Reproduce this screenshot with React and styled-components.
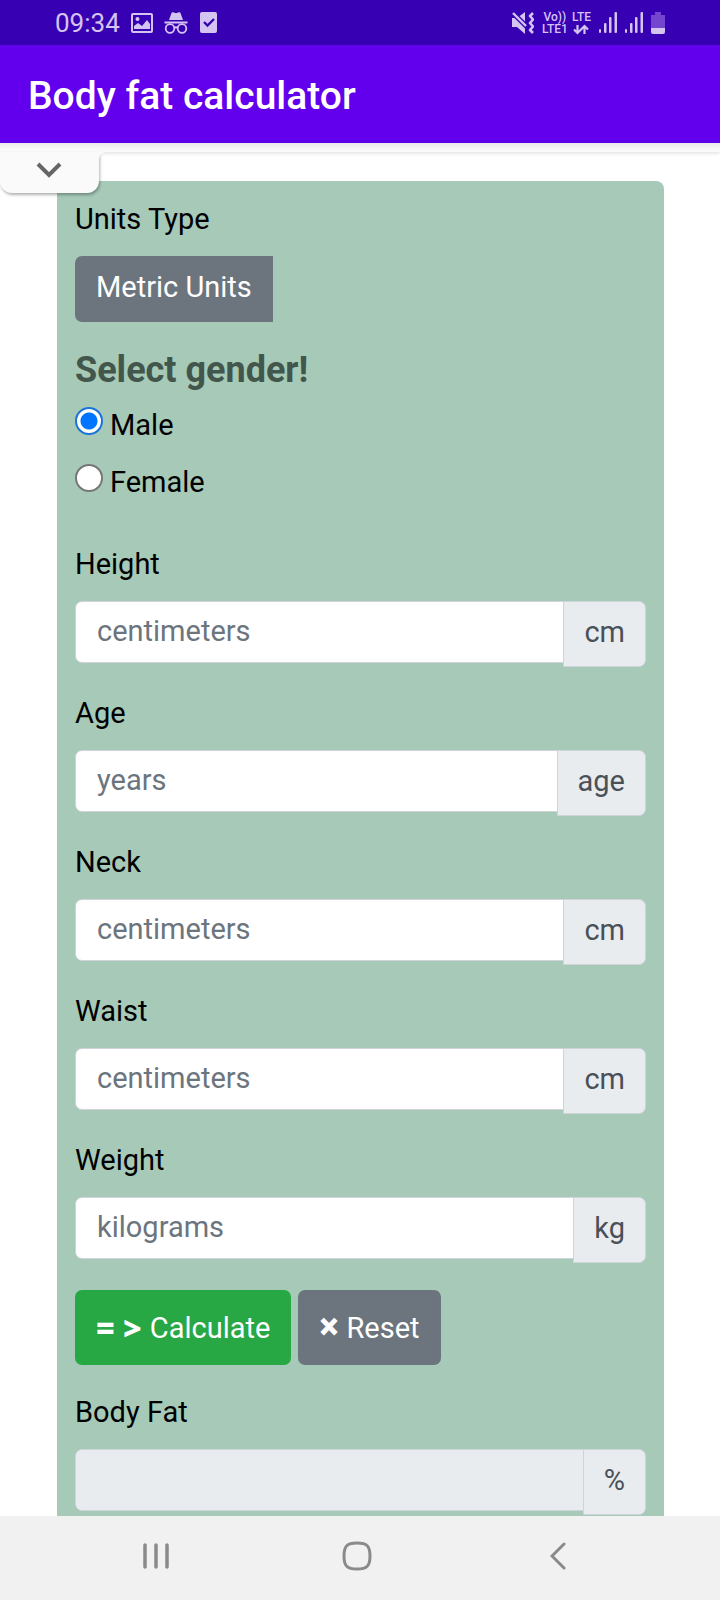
import React, { useState } from 'react';
import styled, { createGlobalStyle } from 'styled-components';

const measures = [
  { id: 'height', label: 'Height', placeholder: 'centimeters', unit: 'cm' },
  { id: 'age', label: 'Age', placeholder: 'years', unit: 'age' },
  { id: 'neck', label: 'Neck', placeholder: 'centimeters', unit: 'cm' },
  { id: 'waist', label: 'Waist', placeholder: 'centimeters', unit: 'cm' },
  { id: 'weight', label: 'Weight', placeholder: 'kilograms', unit: 'kg' },
];

const SignalIcon = () => (
  <svg width="18" height="21" viewBox="0 0 18 21" fill="currentColor">
    <rect x="0" y="17" width="2" height="4" rx="1" />
    <rect x="5" y="11" width="2.5" height="10" rx="1" />
    <rect x="10" y="5" width="2.5" height="16" rx="1" />
    <rect x="15.500" y="0" width="2.5" height="21" rx="1" />
  </svg>
);

const StatusBar = () => (
  <Status>
    <StatusGroup $gap={11}>
      <Clock>09:34</Clock>
      <svg width="22" height="20" viewBox="0 0 22 20">
        <rect x="1" y="1" width="20" height="18" rx="1" fill="none" stroke="currentColor" strokeWidth="2" />
        <circle cx="6.5" cy="6" r="2" fill="currentColor" />
        <path d="M3 16v-3l4-3 4 3 5-6 3 4v5z" fill="currentColor" />
      </svg>
      <svg width="24" height="22" viewBox="0 0 24 22">
        <path d="M5 8 7.5 1q.5-1 1.5-.7l3 1 3-1q1-.3 1.5.7L19 8zM.5 9.5h23v2H.5z" fill="currentColor" />
        <g fill="none" stroke="currentColor" strokeWidth="1.8">
          <circle cx="6" cy="16.5" r="4.300" />
          <circle cx="18" cy="16.5" r="4.300" />
          <path d="M10 16q2-1.500 4 0" />
        </g>
      </svg>
      <svg width="18" height="21" viewBox="0 0 18 21">
        <rect x="1" width="17" height="21" rx="2" fill="currentColor" />
        <path d="M5 10l3.500 3.500L15 7" fill="none" stroke="#3700b3" strokeWidth="2.400" />
      </svg>
    </StatusGroup>
    <StatusGroup $gap={8}>
      <svg width="22" height="22" viewBox="0 0 22 22">
        <path d="M0 6h5l8-6v22l-8-7H0z" fill="currentColor" />
        <path d="M0 0 15 15" stroke="#3700b3" strokeWidth="5" />
        <path d="M1 1l13 13" stroke="currentColor" strokeWidth="2.400" />
        <path d="M21 1l-3 3 3 3.500-3 3.500 3 3.500-3 3.500 3 3" fill="none" stroke="currentColor" strokeWidth="2.600" strokeLinejoin="round" />
      </svg>
      <StatusGroup $gap={4}>
        <NetLabel>
          <span>Vo))</span>
          <span>LTE1</span>
        </NetLabel>
        <NetLabel>
          <span>LTE</span>
          <svg width="16" height="12" viewBox="0 0 16 12" fill="none" stroke="currentColor" strokeWidth="2.200">
            <path d="M4.500 2v8M1 6.500l3.500 3.500L8 6.500M11.500 11V3M8 6.500L11.500 3 15 6.500" />
          </svg>
        </NetLabel>
      </StatusGroup>
      <SignalIcon />
      <SignalIcon />
      <svg width="14" height="22" viewBox="0 0 14 22">
        <path d="M4 0h6v3h4v13H0V3h4z" fill="#7446cf" />
        <path d="M0 16h14v4q0 2-2 2H2q-2 0-2-2z" fill="currentColor" />
      </svg>
    </StatusGroup>
  </Status>
);

const UnitField = ({ id, label, placeholder, unit, value, onChange, readOnly }) => (
  <Field>
    <Label htmlFor={id}>{label}</Label>
    <InputGroup>
      <Input id={id} type="text" placeholder={placeholder} value={value} onChange={onChange} readOnly={readOnly} />
      <Unit>{unit}</Unit>
    </InputGroup>
  </Field>
);

const App = () => {
  const [gender, setGender] = useState('male');
  const [values, setValues] = useState({});
  const [result, setResult] = useState('');

  const valueHandler = id => event => {
    setValues({ ...values, [id]: event.target.value });
  };

  const calculate = event => {
    event.preventDefault();
    const height = Number(values.height);
    const neck = Number(values.neck);
    const waist = Number(values.waist);
    if (!height || waist <= neck) return;
    const base = gender === 'male'
      ? 1.0324 - 0.19077 * Math.log10(waist - neck) + 0.15456 * Math.log10(height)
      : 1.29579 - 0.35004 * Math.log10(waist - neck) + 0.221 * Math.log10(height);
    setResult((495 / base - 450).toFixed(1));
  };

  const reset = () => {
    setValues({});
    setResult('');
  };

  return (
    <Screen>
      <GlobalStyle />
      <StatusBar />
      <AppBar>
        <Title>Body fat calculator</Title>
      </AppBar>
      <Strip>
        <PullTab type="button" aria-label="Expand">
          <svg width="26" height="17" viewBox="0 0 26 17">
            <path d="M2 2l11 11L24 2" fill="none" stroke="#666" strokeWidth="4" />
          </svg>
        </PullTab>
      </Strip>
      <Content>
        <Card onSubmit={calculate}>
          <Field>
            <Label as="div">Units Type</Label>
            <UnitsButton type="button">Metric Units</UnitsButton>
          </Field>
          <Heading>Select gender!</Heading>
          <Genders>
            <RadioLabel>
              <Radio name="gender" checked={gender === 'male'} onChange={() => setGender('male')} />
              Male
            </RadioLabel>
            <RadioLabel>
              <Radio name="gender" checked={gender === 'female'} onChange={() => setGender('female')} />
              Female
            </RadioLabel>
          </Genders>
          {measures.map(item => (
            <UnitField key={item.id} {...item} value={values[item.id] || ''} onChange={valueHandler(item.id)} />
          ))}
          <Actions>
            <ActionButton type="submit" $color="#28a745"><Sign>= &gt;</Sign>Calculate</ActionButton>
            <ActionButton type="button" onClick={reset}><Cross>×</Cross>Reset</ActionButton>
          </Actions>
          <UnitField id="fat" label="Body Fat" unit="%" value={result} readOnly />
        </Card>
      </Content>
      <NavBar>
        <NavButton type="button" aria-label="Recent apps">
          <svg width="26" height="26" viewBox="0 0 26 26" stroke="#8a8a8a" strokeWidth="3.500" strokeLinecap="round">
            <path d="M2 2v22M13 2v22M24 2v22" />
          </svg>
        </NavButton>
        <NavButton type="button" aria-label="Home">
          <svg width="30" height="30" viewBox="0 0 30 30" fill="none" stroke="#8a8a8a" strokeWidth="3">
            <path d="M15 2c10 0 13 3 13 13s-3 13-13 13S2 25 2 15 5 2 15 2z" />
          </svg>
        </NavButton>
        <NavButton type="button" aria-label="Back">
          <svg width="16" height="28" viewBox="0 0 16 28" fill="none" stroke="#8a8a8a" strokeWidth="3" strokeLinecap="round">
            <path d="M14 2L2 14l12 12" />
          </svg>
        </NavButton>
      </NavBar>
    </Screen>
  );
};

export default App;

const GlobalStyle = createGlobalStyle`
  * {
    box-sizing: border-box;
  }
  body {
    margin: 0;
    background: #fff;
    color: #000;
    font-family: Roboto, sans-serif;
  }
  button, input {
    font-family: inherit;
  }
  svg {
    display: block;
    flex: none;
  }
`;

const Screen = styled.div`
  display: flex;
  flex-direction: column;
  height: 100vh;
`;

const Status = styled.div`
  display: flex;
  flex: none;
  justify-content: space-between;
  align-items: center;
  height: 45px;
  padding: 0 55px;
  background: #3700b3;
  color: #d4c4f2;
`;

const StatusGroup = styled.div`
  display: flex;
  align-items: center;
  gap: ${({ $gap }) => $gap}px;
`;

const Clock = styled.span`
  font-size: 26px;
`;

const NetLabel = styled.span`
  display: flex;
  flex-direction: column;
  align-items: center;
  font-size: 12px;
  font-weight: 500;
  line-height: 12px;
`;

const AppBar = styled.header`
  display: flex;
  flex: none;
  align-items: center;
  height: 98px;
  padding: 4px 28px 0;
  background: #6200ee;
  color: #fff;
`;

const Title = styled.h1`
  margin: 0;
  font-size: 39px;
  font-weight: 500;
  line-height: 44px;
`;

const Strip = styled.div`
  position: relative;
  z-index: 1;
  flex: none;
  height: 9px;
  background: linear-gradient(#e9e9ec, #f9f9f9 70%);
  box-shadow: 0 1px 4px rgba(0, 0, 0, 0.15);
`;

/* hangs over the card below the strip */
const PullTab = styled.button`
  position: absolute;
  top: 100%;
  left: 0;
  display: flex;
  justify-content: center;
  width: 99px;
  height: 41px;
  padding: 10px 2px 0 0;
  border: 0;
  border-radius: 0 0 12px 12px;
  background: #fafafa;
  box-shadow: 1px 2px 3px rgba(0, 0, 0, 0.3);

  &::after {
    content: '';
    position: absolute;
    top: 0;
    left: 100%;
    width: 6px;
    height: 6px;
    background: radial-gradient(circle at 100% 100%, transparent 5px, #fafafa 6px);
  }
`;

const Content = styled.main`
  flex: 1;
  min-height: 0;
  padding: 29px 56px 0 57px;
  overflow-y: auto;
  scrollbar-width: none;
`;

const Card = styled.form`
  padding: 17px 18px;
  border-radius: 8px;
  background: #a6c9b8;
`;

const Field = styled.div`
  margin-bottom: 25px;
`;

const Label = styled.label`
  display: block;
  margin-bottom: 15px;
  font-size: 29px;
  line-height: 43px;
`;

const UnitsButton = styled.button`
  display: block;
  height: 66px;
  padding: 0 21px 4px;
  border: 0;
  border-radius: 7px 0 0 7px;
  background: #6c757d;
  color: #fff;
  font-size: 29px;
`;

const Heading = styled.h2`
  margin: 27px 0 12px;
  color: #42564b;
  font-size: 36px;
  font-weight: 700;
  line-height: 43px;
`;

const Genders = styled.div`
  display: flex;
  flex-direction: column;
  align-items: flex-start;
  gap: 14px;
  margin-bottom: 39px;
`;

const RadioLabel = styled.label`
  display: flex;
  align-items: flex-start;
  gap: 7px;
  font-size: 29px;
  line-height: 43px;
`;

const Radio = styled.input.attrs({ type: 'radio' })`
  appearance: none;
  width: 28px;
  height: 28px;
  margin: 3px 0 0;
  border: 2px solid #767676;
  border-radius: 50%;
  background: #fff;

  &:checked {
    border-color: #1a73d9;
    background: radial-gradient(circle, #0075ff 8px, #fff 9px);
  }
`;

const InputGroup = styled.div`
  display: flex;
  align-items: flex-start;
`;

const Input = styled.input`
  flex: 1;
  min-width: 0;
  height: 62px;
  padding: 0 21px 3px;
  border: 1px solid #ced4da;
  border-radius: 7px 0 0 7px;
  background: ${({ readOnly }) => (readOnly ? '#e9ecef' : '#fff')};
  color: #495057;
  font-size: 29px;
  outline: 0;

  &::placeholder {
    color: #6c757d;
  }
`;

const Unit = styled.span`
  height: 66px;
  margin-left: -1px;
  padding: 9px 20px;
  border: 1px solid #ced4da;
  border-radius: 0 7px 7px 0;
  background: #e9ecef;
  color: #495057;
  font-size: 29px;
  line-height: 43px;
`;

const Actions = styled.div`
  display: flex;
  gap: 7px;
  margin: 27px 0 26px;
`;

const ActionButton = styled.button`
  display: flex;
  align-items: center;
  gap: 8px;
  height: 75px;
  padding: 0 21px;
  border: 0;
  border-radius: 7px;
  background: ${({ $color }) => $color || '#6c757d'};
  color: #fff;
  font-size: 29px;
`;

const Sign = styled.span`
  font-family: 'Open Sans', sans-serif;
  font-size: 32px;
  font-weight: 800;
  line-height: 43px;
`;

const Cross = styled.span`
  font-size: 36px;
  font-weight: 900;
  line-height: 43px;
`;

const NavBar = styled.nav`
  display: flex;
  flex: none;
  height: 84px;
  padding: 0 62px 4px 56px;
  background: #f1f1f1;
`;

const NavButton = styled.button`
  display: flex;
  flex: 1;
  align-items: center;
  justify-content: center;
  border: 0;
  background: none;
`;
